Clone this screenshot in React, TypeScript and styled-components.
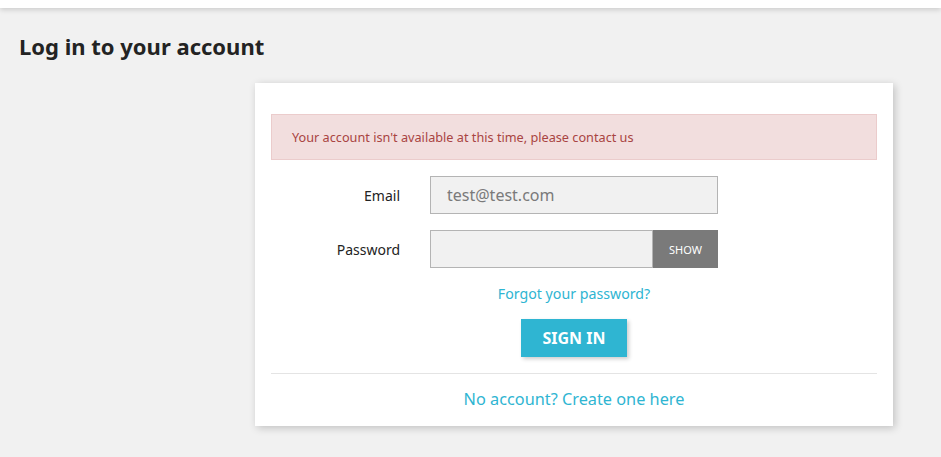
import { FC } from "react";
import styled, { createGlobalStyle } from "styled-components";

const GlobalStyle = createGlobalStyle`
  html, body {
    margin: 0;
    padding: 0;
    background: #f1f1f1;
    font-family: "Noto Sans", "Open Sans", sans-serif;
    color: #232323;
  }
  * {
    box-sizing: border-box;
  }
`;

const TopBar = styled.header`
  height: 8px;
  background: #fff;
  box-shadow: 0 2px 5px rgba(0, 0, 0, 0.15);
`;

const Main = styled.main`
  padding: 24px 48px 26px 19px;
`;

const PageTitle = styled.h1`
  margin: 0 0 23px;
  font-size: 22px;
  line-height: 28px;
  font-weight: 700;
  color: #232323;
`;

const Card = styled.section`
  margin-left: 236px;
  width: 638px;
  background: #fff;
  padding: 31px 16px 16px;
  box-shadow: 2px 2px 8px 0 rgba(0, 0, 0, 0.2);
`;

const Alert = styled.div`
  background: #f2dede;
  border: 1px solid #ebcccc;
  color: #a94442;
  font-size: 12.7px;
  line-height: 20px;
  padding: 12px 20px;
  margin-bottom: 16px;
`;

const FormRow = styled.div`
  display: grid;
  grid-template-columns: 129px 288px 1fr;
  column-gap: 30px;
  align-items: center;
  margin-bottom: 16px;
`;

const Label = styled.label`
  text-align: right;
  font-size: 14px;
  color: #232323;
`;

const InputGroup = styled.div`
  display: flex;
  height: 38px;
`;

const TextInput = styled.input`
  flex: 1;
  min-width: 0;
  height: 38px;
  background: #f1f1f1;
  border: 1px solid rgba(0, 0, 0, 0.25);
  padding: 0 16px;
  font-family: inherit;
  font-size: 16px;
  color: #7a7a7a;
  outline: none;
  &::placeholder {
    color: #7a7a7a;
  }
`;

const ShowButton = styled.button`
  width: 65px;
  border: none;
  background: #7a7a7a;
  color: #fff;
  font-family: inherit;
  font-size: 11px;
  text-transform: uppercase;
  padding: 0;
  cursor: pointer;
`;

const Centered = styled.div<{ $mt?: number }>`
  display: grid;
  grid-template-columns: 129px 288px 1fr;
  column-gap: 30px;
  margin-top: ${(p) => p.$mt ?? 0}px;
  & > * {
    grid-column: 2;
    justify-self: center;
    white-space: nowrap;
  }
`;

const Link = styled.a<{ $size: number }>`
  color: #2fb5d2;
  text-decoration: none;
  font-size: ${(p) => p.$size}px;
  cursor: pointer;
`;

const SignIn = styled.button`
  height: 38px;
  padding: 0 21px;
  background: #2fb5d2;
  color: #fff;
  border: none;
  font-family: inherit;
  font-weight: 700;
  font-size: 16px;
  text-transform: uppercase;
  box-shadow: 2px 2px 4px 0 rgba(0, 0, 0, 0.2);
  cursor: pointer;
`;

const Divider = styled.hr`
  border: none;
  border-top: 1px solid #e4e4e4;
  margin: 16px 0 14px;
`;

const App: FC = () => {
  return (
    <>
      <GlobalStyle />
      <TopBar />
      <Main>
        <PageTitle>Log in to your account</PageTitle>
        <Card>
          <Alert>Your account isn't available at this time, please contact us</Alert>
          <FormRow>
            <Label>Email</Label>
            <InputGroup>
              <TextInput defaultValue="test@test.com" />
            </InputGroup>
          </FormRow>
          <FormRow>
            <Label>Password</Label>
            <InputGroup>
              <TextInput type="password" />
              <ShowButton>Show</ShowButton>
            </InputGroup>
          </FormRow>
          <Centered>
            <Link $size={14.2}>Forgot your password?</Link>
          </Centered>
          <Centered $mt={16}>
            <SignIn>Sign in</SignIn>
          </Centered>
          <Divider />
          <Centered>
            <Link $size={16.3}>No account? Create one here</Link>
          </Centered>
        </Card>
      </Main>
    </>
  );
};

export default App;
